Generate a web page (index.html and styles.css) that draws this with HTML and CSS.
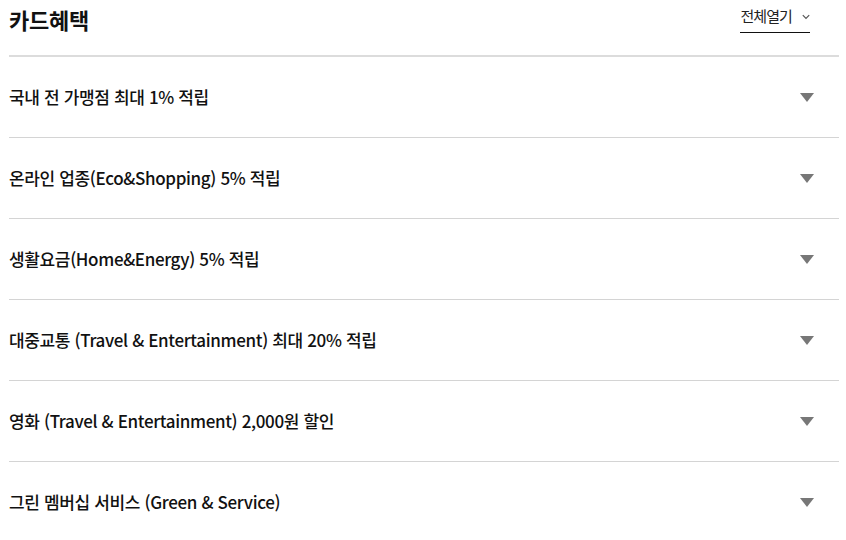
FILE: index.html
```html
<!DOCTYPE html>
<html lang="ko">
<head>
<meta charset="utf-8">
<title>카드혜택</title>
<link rel="stylesheet" href="styles.css">
</head>
<body>
<section class="benefits">
  <header class="head">
    <h2 class="title">카드혜택</h2>
    <button class="open-all" type="button">전체열기
      <svg class="chev" width="8" height="6" viewBox="0 0 8 6"><path d="M0.8 1.2l3.2 3.2l3.2-3.2" fill="none" stroke="#555" stroke-width="1.2"/></svg>
    </button>
  </header>
  <ul class="list">
    <li class="item"><span class="label">국내 전 가맹점 최대 1% 적립</span><span class="tri"></span></li>
    <li class="item"><span class="label">온라인 업종(Eco&amp;Shopping) 5% 적립</span><span class="tri"></span></li>
    <li class="item"><span class="label">생활요금(Home&amp;Energy) 5% 적립</span><span class="tri"></span></li>
    <li class="item"><span class="label">대중교통 (Travel &amp; Entertainment) 최대 20% 적립</span><span class="tri"></span></li>
    <li class="item"><span class="label">영화 (Travel &amp; Entertainment) 2,000원 할인</span><span class="tri"></span></li>
    <li class="item"><span class="label">그린 멤버십 서비스 (Green &amp; Service)</span><span class="tri"></span></li>
  </ul>
</section>
</body>
</html>
```
FILE: styles.css
```css
html, body {
  margin: 0;
  padding: 0;
  background: #fff;
}
body {
  font-family: "Noto Sans CJK KR", "Noto Sans", sans-serif;
  color: #111;
}
.benefits {
  width: 830px;
  margin: 0 0 0 9px;
}
.head {
  height: 55px;
  border-bottom: 2px solid #dcdcdc;
  display: flex;
  justify-content: space-between;
  align-items: flex-start;
}
.title {
  margin: 0;
  padding-top: 4px;
  font-size: 22px;
  line-height: 30px;
  font-weight: 700;
  letter-spacing: -0.2px;
}
.open-all {
  margin: 5px 29px 0 0;
  padding: 0 0 5px 0;
  border: 0;
  border-bottom: 1px solid #111;
  background: none;
  font-family: inherit;
  font-size: 15px;
  line-height: 22px;
  color: #222;
  display: flex;
  align-items: center;
  gap: 10px;
  letter-spacing: -0.9px;
  cursor: pointer;
}
.chev {
  display: block;
  margin-top: 1px;
}
.list {
  list-style: none;
  margin: 0;
  padding: 0;
}
.item {
  height: 80px;
  border-bottom: 1px solid #d4d4d4;
  display: flex;
  align-items: center;
  justify-content: space-between;
}
.item:last-child {
  border-bottom: 0;
}
.label {
  font-size: 17px;
  font-weight: 500;
  letter-spacing: -0.35px;
  color: #111;
  margin-top: -2px;
}
.tri {
  width: 0;
  height: 0;
  margin-right: 25px;
  margin-top: 0;
  border-left: 7px solid transparent;
  border-right: 7px solid transparent;
  border-top: 9px solid #777;
}
```
